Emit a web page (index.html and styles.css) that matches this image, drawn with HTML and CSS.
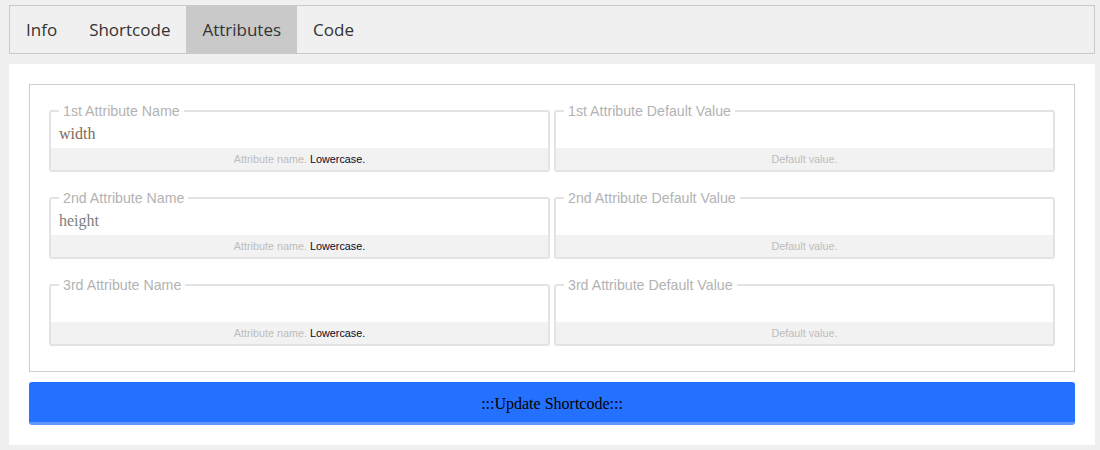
FILE: index.html
```html
<!DOCTYPE html>
<html>
<head>
<meta charset="utf-8">
<link rel="stylesheet" href="styles.css">
</head>
<body>
<nav class="tabs">
  <span class="tab">Info</span>
  <span class="tab">Shortcode</span>
  <span class="tab active">Attributes</span>
  <span class="tab">Code</span>
</nav>
<main class="panel">
  <section class="box">
    <div class="row">
      <fieldset class="field">
        <legend>1st Attribute Name</legend>
        <div class="value brown">width</div>
        <div class="help">Attribute name. <b>Lowercase.</b></div>
      </fieldset>
      <fieldset class="field">
        <legend>1st Attribute Default Value</legend>
        <div class="value"></div>
        <div class="help">Default value.</div>
      </fieldset>
    </div>
    <div class="row">
      <fieldset class="field">
        <legend>2nd Attribute Name</legend>
        <div class="value">height</div>
        <div class="help">Attribute name. <b>Lowercase.</b></div>
      </fieldset>
      <fieldset class="field">
        <legend>2nd Attribute Default Value</legend>
        <div class="value"></div>
        <div class="help">Default value.</div>
      </fieldset>
    </div>
    <div class="row">
      <fieldset class="field">
        <legend>3rd Attribute Name</legend>
        <div class="value"></div>
        <div class="help">Attribute name. <b>Lowercase.</b></div>
      </fieldset>
      <fieldset class="field">
        <legend>3rd Attribute Default Value</legend>
        <div class="value"></div>
        <div class="help">Default value.</div>
      </fieldset>
    </div>
  </section>
  <button class="update">:::Update Shortcode:::</button>
</main>
</body>
</html>
```
FILE: styles.css
```css
html, body {
  background: #f0f0f0;
}
body {
  margin: 5px 5px 0 9px;
  font-family: "Liberation Sans", Arial, sans-serif;
}
.tabs {
  display: flex;
  height: 47px;
  border: 1px solid #c9c9c9;
  background: #f0f0f0;
}
.tab {
  display: flex;
  align-items: center;
  padding: 0 16px;
  font-family: "Open Sans", sans-serif;
  font-size: 17px;
  color: #333;
}
.tab.active {
  background: #c9c9c9;
}
.panel {
  margin-top: 10px;
  background: #fff;
  padding: 20px;
  display: flex;
  flex-direction: column;
  gap: 10px;
}
.box {
  border: 1px solid #cfcfcf;
  padding: 18px 19px 25px 19px;
  display: flex;
  flex-direction: column;
  gap: 18px;
}
.row {
  display: grid;
  grid-template-columns: 1fr 1fr;
  gap: 4px;
}
.field {
  margin: 0;
  padding: 0;
  min-width: 0;
  border: 2px solid #e3e3e3;
  border-radius: 3px;
}
.field legend {
  margin-left: 8px;
  padding: 0 4px;
  font-size: 14.2px;
  line-height: 16px;
  color: #b3b3b3;
}
.value {
  height: 29px;
  padding-left: 8px;
  font-family: "Liberation Serif", serif;
  font-size: 16px;
  line-height: 30px;
  color: #7e7e7e;
}
.value.brown {
  color: #7d6a5a;
}
.help {
  height: 22px;
  line-height: 23px;
  background: #f2f2f2;
  text-align: center;
  font-size: 10.8px;
  color: #bdbdbd;
}
.help b {
  font-weight: normal;
  color: #0a0a1e;
}
.update {
  height: 43px;
  border: none;
  border-bottom: 3px solid #5e97fb;
  border-radius: 3px;
  background: #2571ff;
  font-family: "Liberation Serif", serif;
  font-size: 16px;
  color: #000;
  padding: 3px 0 0 0;
}
```
